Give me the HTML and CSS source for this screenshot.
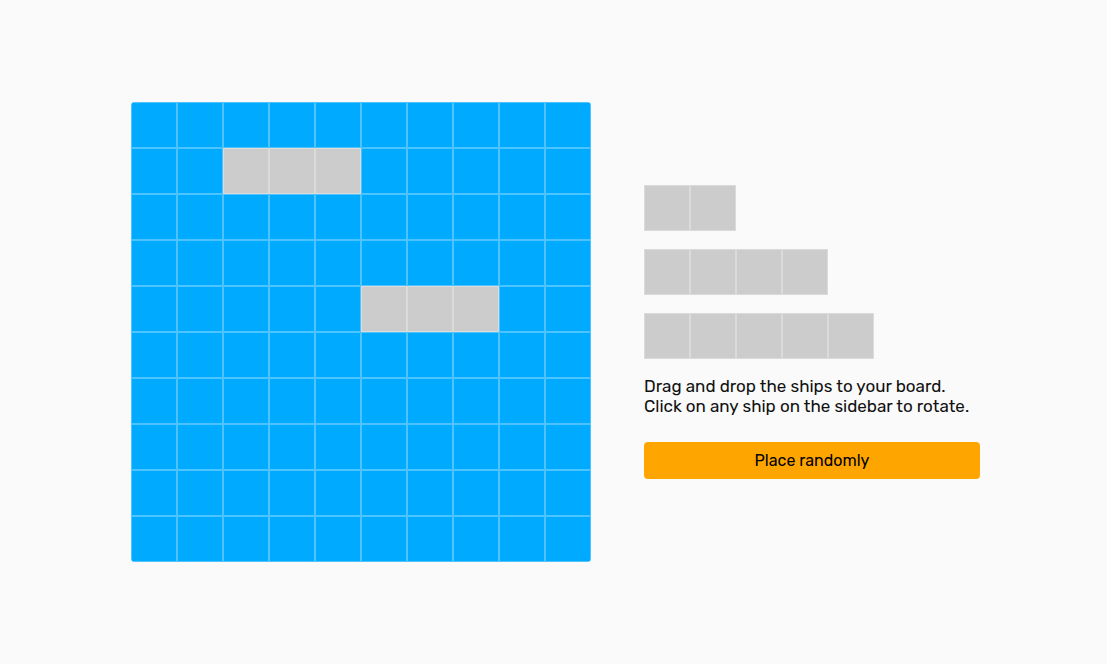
FILE: index.html
```html
<!DOCTYPE html>
<html lang="en">
<head>
<meta charset="utf-8">
<meta name="viewport" content="width=device-width, initial-scale=1">
<title>Battleship</title>
<link rel="stylesheet" href="styles.css">
</head>
<body>
<main class="game">
  <div class="board" id="board"></div>
  <section class="sidebar">
    <div class="fleet">
      <button class="ship" type="button" draggable="true" aria-label="Ship, 2 cells"><span class="cell"></span><span class="cell"></span></button>
      <button class="ship" type="button" draggable="true" aria-label="Ship, 4 cells"><span class="cell"></span><span class="cell"></span><span class="cell"></span><span class="cell"></span></button>
      <button class="ship" type="button" draggable="true" aria-label="Ship, 5 cells"><span class="cell"></span><span class="cell"></span><span class="cell"></span><span class="cell"></span><span class="cell"></span></button>
    </div>
    <p class="hint">Drag and drop the ships to your board.<br>Click on any ship on the sidebar to rotate.</p>
    <button class="random" type="button">Place randomly</button>
  </section>
</main>
<script src="board.js"></script>
</body>
</html>
```
FILE: styles.css
```css
*, *::before, *::after {
  box-sizing: border-box;
}

body {
  margin: 0;
  background: #fafafa;
  color: #111;
  font-family: Rubik, Inter, Roboto, sans-serif;
  font-size: 17px;
  line-height: 20px;
}

.game {
  display: flex;
  flex-wrap: wrap;
  align-items: center;
  align-content: center;
  justify-content: center;
  gap: 53px;
  min-height: 100vh;
  padding-left: 4px;
}

.board {
  display: grid;
  grid-template-columns: repeat(10, 46px);
  border-radius: 4px;
  overflow: hidden;
  background: #0af;
}

.cell {
  width: 46px;
  height: 46px;
  border: 1px solid rgba(255, 255, 255, 0.3);
}

.cell-ship,
.ship .cell {
  background: #ccc;
}

.sidebar {
  display: flex;
  flex-direction: column;
  min-width: 336px;
}

.fleet {
  display: flex;
  flex-direction: column;
  align-items: flex-start;
  gap: 18px;
}

.ship {
  display: flex;
  padding: 0;
  border: 0;
  background: none;
  cursor: grab;
}

.hint {
  margin: 17px 0 26px;
}

.random {
  padding: 8px 16px;
  border: 0;
  border-radius: 4px;
  background: #ffa500;
  color: #000;
  font-family: inherit;
  font-size: 16px;
  line-height: 21px;
  cursor: pointer;
}
```
FILE: board.js
```js
const size = 10;
const placed = [
  { row: 1, column: 2, length: 3 },
  { row: 4, column: 5, length: 3 },
];
const board = document.getElementById("board");

for (let row = 0; row < size; row++) {
  for (let column = 0; column < size; column++) {
    const cell = document.createElement("div");
    const taken = placed.some(
      (s) => s.row === row && column >= s.column && column < s.column + s.length
    );
    cell.className = taken ? "cell cell-ship" : "cell";
    board.append(cell);
  }
}
```
